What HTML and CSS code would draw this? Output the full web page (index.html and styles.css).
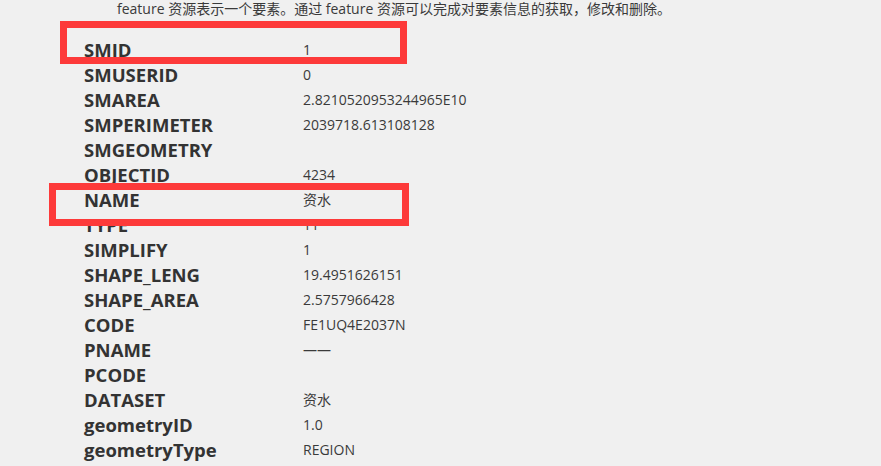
FILE: index.html
```html
<!DOCTYPE html>
<html lang="zh">
<head>
<meta charset="utf-8">
<link rel="stylesheet" href="styles.css">
</head>
<body>
<div class="page">
  <p class="intro">feature 资源表示一个要素。通过 feature 资源可以完成对要素信息的获取，修改和删除。</p>
  <dl class="fields">
    <dt>SMID</dt><dd>1</dd>
    <dt>SMUSERID</dt><dd>0</dd>
    <dt>SMAREA</dt><dd>2.8210520953244965E10</dd>
    <dt>SMPERIMETER</dt><dd>2039718.613108128</dd>
    <dt>SMGEOMETRY</dt><dd></dd>
    <dt>OBJECTID</dt><dd>4234</dd>
    <dt>NAME</dt><dd>资水</dd>
    <dt>TYPE</dt><dd>11</dd>
    <dt>SIMPLIFY</dt><dd>1</dd>
    <dt>SHAPE_LENG</dt><dd>19.4951626151</dd>
    <dt>SHAPE_AREA</dt><dd>2.5757966428</dd>
    <dt>CODE</dt><dd>FE1UQ4E2037N</dd>
    <dt>PNAME</dt><dd>——</dd>
    <dt>PCODE</dt><dd></dd>
    <dt>DATASET</dt><dd>资水</dd>
    <dt>geometryID</dt><dd>1.0</dd>
    <dt>geometryType</dt><dd>REGION</dd>
  </dl>
  <div class="mark mark-smid"></div>
  <div class="mark mark-name"></div>
</div>
</body>
</html>
```

FILE: styles.css
```css
html, body {
  margin: 0;
  padding: 0;
  background: #f0f0f0;
}
.page {
  position: relative;
  width: 881px;
  height: 466px;
  overflow: hidden;
  color: #333;
  font-family: "Open Sans", "Noto Sans CJK SC", sans-serif;
}
.intro {
  margin: 0;
  padding-left: 117px;
  font-size: 14px;
  line-height: 18px;
  color: #3a3a3a;
}
.fields {
  margin: 19px 0 0 84px;
  display: grid;
  grid-template-columns: 219px auto;
  grid-auto-rows: 25px;
  align-items: center;
}
.fields dt {
  font-weight: 700;
  font-size: 18.5px;
  color: #333;
  line-height: 25px;
}
.fields dd {
  margin: 0;
  font-size: 14px;
  line-height: 25px;
  color: #3a3a3a;
}
.mark {
  position: absolute;
  border: 7px solid #fd3a3a;
  box-sizing: border-box;
}
.mark-smid {
  left: 60px;
  top: 21px;
  width: 347px;
  height: 43px;
}
.mark-name {
  left: 49px;
  top: 183px;
  width: 360px;
  height: 43px;
}
```
